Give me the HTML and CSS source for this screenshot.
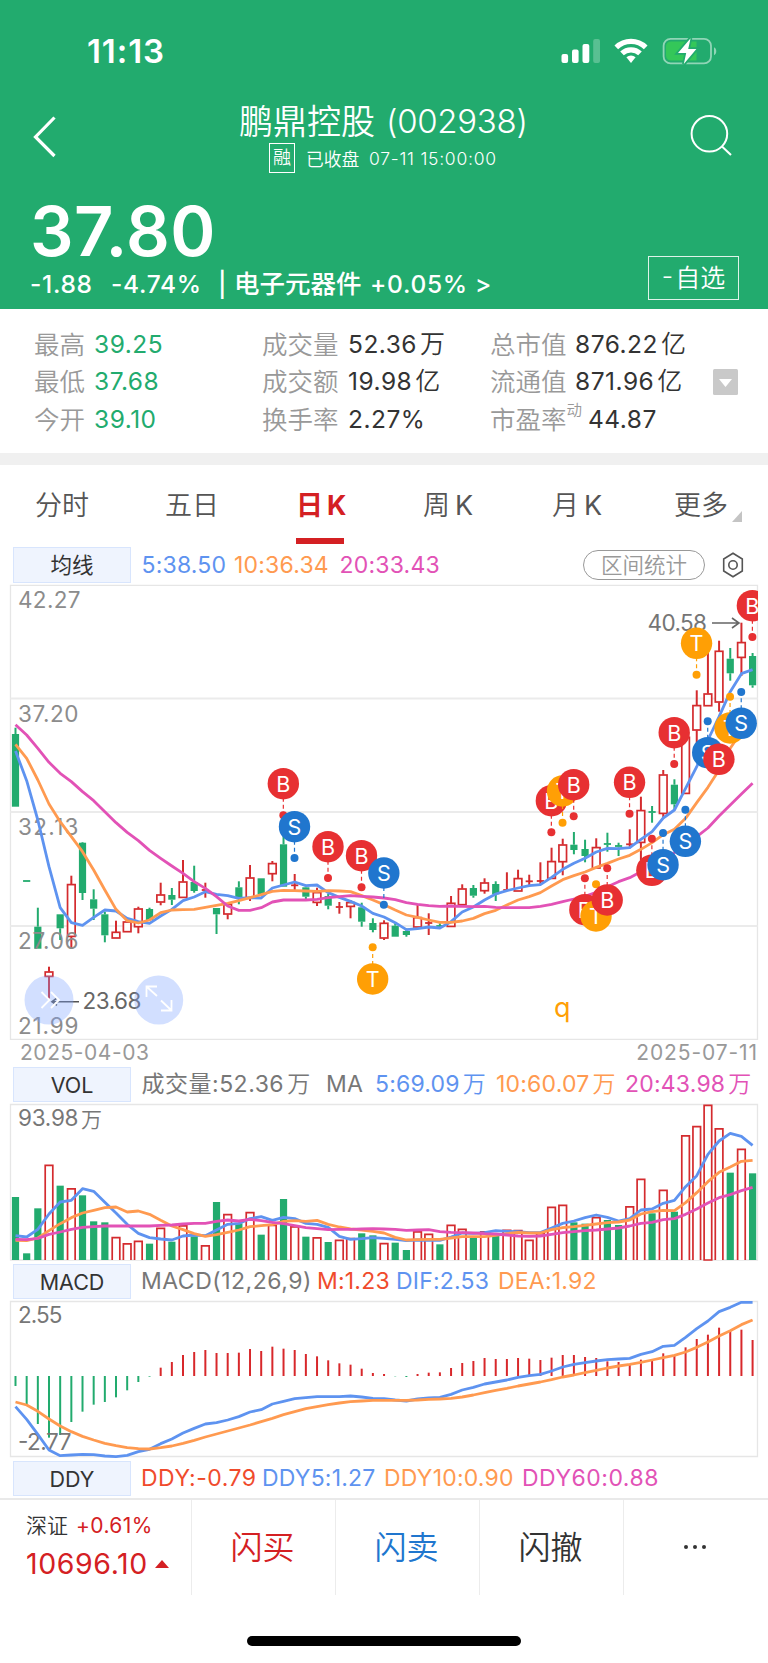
FILE: index.html
```html
<!DOCTYPE html>
<html lang="zh-CN">
<head>
<meta charset="utf-8">
<title>鹏鼎控股 (002938)</title>
<link rel="stylesheet" href="styles.css">
</head>
<body>
<header class="header">
  <div class="status">
    <span class="clock">11:13</span>
    <svg class="status-icons" width="160" height="32" viewBox="560 35 160 32">
      <g fill="#fff">
        <rect x="561.5" y="54" width="6.6" height="9" rx="2"/>
        <rect x="572" y="49.5" width="6.6" height="13.5" rx="2"/>
        <rect x="582.5" y="44" width="6.8" height="19" rx="2"/>
        <rect x="593.2" y="39" width="6.8" height="24" rx="2" opacity=".25"/>
      </g>
      <g fill="none" stroke="#fff" stroke-width="5.2">
        <path d="M616.3 47.4a21 21 0 0 1 29.4 0"/>
        <path d="M622 53.4a13 13 0 0 1 18 0"/>
      </g>
      <path d="M626.4 57.2a7 7 0 0 1 9.2 0L631 63z" fill="#fff"/>
      <rect x="663.6" y="38.8" width="47.4" height="24.6" rx="7" fill="none" stroke="#fff" stroke-opacity=".5" stroke-width="1.8"/>
      <path d="M714 47.2v8c3-1.2 3-6.800 0-8z" fill="#fff" opacity=".5"/>
      <path d="M671 41.400h25.500v19.200H671a5 5 0 0 1-5-5v-9.200a5 5 0 0 1 5-5z" fill="#34c759"/>
      <path d="M690.600 38.200 678 52.900h8.200l-2.400 11.200L696.400 48.900h-8.200z" fill="#fff" stroke="#22ab6e" stroke-width="3.500" paint-order="stroke"/>
    </svg>
  </div>
  <div class="nav">
    <svg class="back" width="26" height="46" viewBox="32 114 26 46"><path d="M54.500 117.500 35.500 137l19 19" fill="none" stroke="#fff" stroke-width="3.200"/></svg>
    <div class="heading">
      <h1><span class="name">鹏鼎控股</span><span class="code">(002938)</span></h1>
      <p><i class="tag">融</i><span class="closed">已收盘</span><span class="time">07-11 15:00:00</span></p>
    </div>
    <svg class="search" width="44" height="46" viewBox="690 114 44 46"><g fill="none" stroke="#fff" stroke-width="2"><circle cx="709.400" cy="133.800" r="17.800"/><path d="m722 146.500 9 8.500"/></g></svg>
  </div>
  <div class="quote">
    <div>
      <div class="price">37.80</div>
      <div class="change"><span>-1.88</span><span>-4.74%</span><span>|</span><span class="sector">电子元器件</span><span>+0.05%</span><span>&gt;</span></div>
    </div>
    <button class="fav"><span>-</span>自选</button>
  </div>
</header>

<section class="stats">
  <dl class="s1">
    <dt>最高</dt><dd>39.25</dd>
    <dt>最低</dt><dd>37.68</dd>
    <dt>今开</dt><dd>39.10</dd>
  </dl>
  <dl class="s2">
    <dt>成交量</dt><dd>52.36<b>万</b></dd>
    <dt>成交额</dt><dd>19.98<b>亿</b></dd>
    <dt>换手率</dt><dd>2.27%</dd>
  </dl>
  <dl class="s3">
    <dt>总市值</dt><dd>876.22<b>亿</b></dd>
    <dt>流通值</dt><dd>871.96<b>亿</b></dd>
    <dt>市盈率<sup>动</sup></dt><dd class="pe">44.87</dd>
  </dl>
  <svg class="expand" width="25" height="26" viewBox="0 0 25 26"><rect width="25" height="26" rx="1.500" fill="#c9c9c9"/><path d="M6 10h13l-6.500 8z" fill="#fff"/></svg>
</section>

<nav class="tabs">
  <a>分时</a><a>五日</a><a class="on">日<em>K</em></a><a>周<em>K</em></a><a>月<em>K</em></a><a>更多</a>
  <svg width="10" height="11" viewBox="0 0 10 11"><path d="M10 0v11H0z" fill="#c4c4c4"/></svg>
</nav>

<main>
  <div class="legend l-ma">
    <span class="box">均线</span>
    <span class="blue">5:38.50</span><span class="orange">10:36.34</span><span class="pink">20:33.43</span>
    <button class="pill">区间统计</button>
    <svg class="gear" width="24" height="28" viewBox="0 0 24 28"><g fill="none" stroke="#555" stroke-width="1.600"><path d="M12 2.200 21.300 8v12L12 25.800 2.700 20V8z"/><circle cx="12" cy="14" r="4.200"/></g></svg>
  </div>
  <svg class="chart" id="kline" width="768" height="457" viewBox="0 584 768 457"></svg>
  <div class="dates"><span>2025-04-03</span><span>2025-07-11</span></div>
  <div class="legend l-vol">
    <span class="box">VOL</span>
    <span>成交量:52.36<b>万</b></span><span class="ma">MA</span><span class="blue">5:69.09<b>万</b></span><span class="orange">10:60.07<b>万</b></span><span class="pink">20:43.98<b>万</b></span>
  </div>
  <svg class="chart" id="vol" width="768" height="160" viewBox="0 1102 768 160"></svg>
  <div class="legend l-macd">
    <span class="box">MACD</span>
    <span>MACD(12,26,9)</span><span class="red">M:1.23</span><span class="blue">DIF:2.53</span><span class="orange">DEA:1.92</span>
  </div>
  <svg class="chart" id="macd" width="768" height="161" viewBox="0 1299 768 161"></svg>
  <div class="legend l-ddy">
    <span class="box">DDY</span>
    <span class="red">DDY:-0.79</span><span class="blue">DDY5:1.27</span><span class="orange">DDY10:0.90</span><span class="pink">DDY60:0.88</span>
  </div>
</main>

<footer class="bar">
  <div class="index">
    <p><span class="ix">深证</span><span class="pct">+0.61%</span></p>
    <p class="val"><span>10696.10</span><svg width="14" height="8" viewBox="0 0 14 8"><path d="M7 0l7 8H0z" fill="#d42023"/></svg></p>
  </div>
  <a class="buy">闪买</a><a class="sell">闪卖</a><a>闪撤</a>
  <a class="more"><svg width="24" height="6" viewBox="0 0 24 6"><g fill="#333"><circle cx="3" cy="3" r="2"/><circle cx="12" cy="3" r="2"/><circle cx="21" cy="3" r="2"/></g></svg></a>
</footer>
<div class="home"></div>
<script src="charts.js"></script>
</body>
</html>
```
FILE: styles.css
```css
* { box-sizing: border-box; margin: 0; padding: 0; }
body { width: 768px; height: 1663px; overflow: hidden; background: #fff; color: #333; font-family: Inter, "Noto Sans CJK SC", sans-serif; font-weight: 400; }
button { font: inherit; background: none; }
em, i { font-style: normal; }
b { font-weight: inherit; }
svg { display: block; flex: none; }
span, dd, dt { white-space: nowrap; }

.header { height: 309px; background: #22ab6e; color: #fff; overflow: hidden; }
.status { height: 102px; display: flex; align-items: center; justify-content: space-between; padding: 0 48px 0 87px; }
.clock { font-size: 33px; font-weight: 600; letter-spacing: 0.900px; }
.nav { height: 74px; display: flex; padding: 0 34px 0 32px; }
.back, .search { margin-top: 12px; }
.heading { width: 300px; margin-left: 180px; margin-right: 152px; flex: none; }
.heading h1 { height: 38px; line-height: 40px; font-size: 34px; font-weight: 400; display: flex; padding-left: 1px; }
.name { font-weight: 350; width: 147px; }
.code { font-size: 33px; font-weight: 350; letter-spacing: -0.300px; line-height: 38px; }
.heading p { height: 36px; display: flex; align-items: center; font-size: 17.500px; padding-left: 31px; font-weight: 350; }
.tag { width: 26px; height: 30px; border: 1.500px solid #fff; font-size: 18px; line-height: 27px; text-align: center; }
.closed { margin-left: 11px; width: 63px; font-size: 17.800px; }
.time { letter-spacing: 0.750px; }
.quote { height: 105px; margin-top: 20px; display: flex; justify-content: space-between; align-items: flex-end; padding: 0 29px 0 30px; }
.price { height: 71px; line-height: 71px; font-size: 68.500px; font-weight: 600; letter-spacing: 0.500px; }
.change { height: 34px; line-height: 34px; display: grid; grid-template-columns: 81px 107px 16px 136px 105px 30px; font-size: 24.500px; font-weight: 550; letter-spacing: 0.700px; }
.sector { font-size: 25.500px; font-weight: 500; letter-spacing: 0; }
.fav { width: 91px; height: 44px; margin-bottom: 1px; border: 1.500px solid rgba(255,255,255,.85); color: #fff; font-size: 25px; line-height: 42px; font-weight: 350; display: flex; justify-content: center; gap: 2px; }
.fav span { line-height: 38px; }

.stats { height: 144px; padding: 16.500px 30px 0 34px; display: flex; font-size: 25.500px; }
.stats dl { display: grid; grid-auto-rows: 37.600px; line-height: 37.600px; height: 113px; }
.s1 { grid-template-columns: 60px 168px; }
.s2 { grid-template-columns: 86px 142px; }
.s3 { grid-template-columns: 85px 138px; }
.stats dt { color: #999; font-weight: 350; }
.stats dd { font-size: 24.500px; letter-spacing: 0.500px; }
.stats dd b { font-size: 25px; font-weight: 350; margin-left: 3px; letter-spacing: 0; }
.s1 dd { color: #22ab6e; }
.stats sup { font-size: 15.500px; line-height: 0; vertical-align: 13px; }
.pe { padding-left: 13px; }
.expand { margin-top: 43px; }

.tabs { height: 94px; border-top: 12px solid #f0f0f0; display: grid; grid-template-columns: 130px 131px 127px 129px 122px 58px 12px; padding-left: 35px; font-size: 27px; line-height: 81px; color: #555; }
.tabs a { height: 79px; font-weight: 350; }
.tabs em { font-size: 27px; margin-left: 5px; font-weight: 400; }
.tabs .on { color: #d42023; font-weight: 700; border-bottom: 6px solid #d42023; width: 48px; white-space: nowrap; }
.tabs .on em { font-weight: 700; margin-left: 4px; }
.tabs svg { margin-top: 46px; }

main { color: #777; }
.legend { height: 36px; display: grid; align-items: center; line-height: 37px; font-size: 23px; font-weight: 400; padding-left: 13px; letter-spacing: 0.200px; }
.legend b { font-weight: 350; margin-left: 3px; }
.box { width: 118px; height: 35.500px; line-height: 34px; text-align: center; border: 1.500px solid #d8e5fd; background: #eff4fe; color: #333; font-size: 21.500px; }
.l-ma { margin-top: -1px; height: 38px; grid-template-columns: 128.500px 92.500px 105.500px 243.500px 138px 24px; }
.l-vol { grid-template-columns: 128.500px 184.500px 49px 121px 129px 140px; }
.l-vol > span:nth-child(2) { letter-spacing: 0.500px; }
.l-macd { margin-top: 1px; grid-template-columns: 128px 176px 79px 102px 120px; }
.l-macd > span:nth-child(2) { letter-spacing: 0.500px; }
.l-ddy { grid-template-columns: 128px 121px 122px 138px 150px; }
.l-ddy > span:nth-child(2), .l-ddy > span:last-child { letter-spacing: 0.500px; }
.legend .box { letter-spacing: 0; }
.blue { color: #5e93f0; } .orange { color: #ff9a50; } .pink { color: #e252b6; } .red { color: #f04b2c; }
.pill { width: 122px; height: 30px; border: 1.500px solid #999; border-radius: 15px; color: #999; font-size: 21.500px; font-weight: 350; line-height: 26px; letter-spacing: 0; }
.chart { overflow: hidden; }
.dates { height: 25px; line-height: 24px; display: flex; justify-content: space-between; padding: 0 10px 0 20px; font-size: 21px; color: #999; letter-spacing: 0.550px; }
.dates span:last-child { letter-spacing: 0.900px; }

.bar { margin-top: 2px; height: 97px; border-top: 2px solid #e9e9e9; display: grid; grid-template-columns: 192px 144px 144px 144px 144px; }
.bar > * { border-right: 1.500px solid #ececec; }
.bar .more { border: 0; display: flex; justify-content: center; align-items: center; padding-bottom: 2px; }
.bar a { font-size: 32px; line-height: 95px; text-align: center; font-weight: 350; color: #333; height: 95px; padding-right: 2px; }
.bar .buy { color: #d42023; } .bar .sell { color: #2076ce; }
.index { padding: 10px 0 0 26px; }
.index p { height: 32px; line-height: 32px; font-size: 21px; display: flex; }
.ix { width: 50px; font-weight: 350; }
.pct { color: #d42023; letter-spacing: 0.400px; }
.index .val { height: 44px; line-height: 46px; font-size: 28.500px; color: #d42023; align-items: center; gap: 7px; letter-spacing: 0.600px; }
.home { width: 274px; height: 10px; border-radius: 5px; background: #000; margin: 41px auto 0; }
```
FILE: charts.js
```js
const NS = 'http://www.w3.org/2000/svg';
const GREEN = '#22ab6e', RED = '#d42b2e', BLUE = '#5e93f0', ORANGE = '#ff9a50', PINK = '#e252b6';
const X = i => 15.5 + i * 11.168;
const nums = s => s.split(',').map(Number);

function add(p, tag, attrs, text) {
  const e = document.createElementNS(NS, tag);
  for (const k in attrs) e.setAttribute(k, attrs[k]);
  if (text !== undefined) e.textContent = text;
  p.appendChild(e);
  return e;
}
function label(p, x, y, w, text, color = '#8c8c8c', size = 22.5) {
  add(p, 'text', { x, y, textLength: w, fill: color, 'font-size': size }, text);
}
function line(p, ys, color, width = 2.8, from = 0) {
  add(p, 'polyline', { points: ys.map((y, i) => X(i + from) + ',' + y).join(' '), fill: 'none', stroke: color, 'stroke-width': width, 'stroke-linejoin': 'round' });
}
function seg(p, x1, y1, x2, y2, color, w) {
  add(p, 'line', { x1, y1, x2, y2, stroke: color, 'stroke-width': w });
}

// Daily candles: colour, high, body top, body bottom, low
const k = document.getElementById('kline');
add(k, 'path', { d: 'M10.500 585.300H757.500V1039.400H10.500Z', fill: 'none', stroke: '#e6e6e6', 'stroke-width': 1.3 });
[698.6, 812, 926].forEach(y => seg(k, 10.5, y, 757.5, y, '#ebebeb', 2));
const candles = `g 727.7 734 806.7 806.7|g 881.7 881 882.4 881.7|g 907.7 926.7 948.7 948.7|r 966.7 971.7 976.7 998.5|g 914.3 914.3 928.3 940|r 875.7 884.3 936.7 948.3|g 842 842.7 893 900|g 889.3 899.3 908.7 920|g 911.7 914.3 935.3 942.3|r 920.7 932 938.3 938.3|r 921.7 921.7 932 932|r 906.7 908.7 927 933.3|g 907.7 909 920 920|r 882.7 894.7 902.3 905.3|g 888 895 899.7 905|r 860 881.7 897.7 897.7|g 865.7 882 891 892.7|r 882.7 890 890.2 897.7|g 908 908 914.3 934|r 904 904 914.3 919.3|g 881.3 887.3 898.3 904.3|r 865 877.7 898.3 901|g 878.3 878.3 894 894|r 861 863.3 874 881.3|g 816 844.3 886.7 886.7|r 874 885.3 885.5 890|g 885.7 887.3 896.7 900|r 887.7 892.3 902.7 906|g 894 896 905.7 909.3|r 902 907 907.2 913.7|r 900 902.3 906.7 918.3|g 902.7 907.3 921.7 926.7|g 918.3 923 930 932.3|r 920.3 923 938.3 940|g 923.3 925.7 936.7 936.7|g 928.3 931 935 936.7|r 905 917.3 927.3 927.3|r 913.3 923 923.2 935|g 923.3 926 926.2 928.3|r 896 903 926.7 926.7|r 884.3 888.7 905 905|g 885 888 895.7 897.7|r 878.3 882.7 891 893.7|g 881.3 884 894.3 901|r 872.3 890 890.2 890|r 869.7 878.3 891.3 891.3|r 874.7 881.3 881.5 885|r 862.3 881 881.2 885|r 847.7 861.3 878.7 878.7|r 838.7 844.7 862 875.3|g 832 844.7 850 854.3|g 839.7 849 856 862.3|r 838.3 847.3 868.3 868.3|g 832.7 844 844.8 851.7|g 842.7 846 847.3 856|r 829.3 844.3 844.5 848.3|r 796.7 810.3 842.7 860|g 806 812 812.7 822.7|r 770 774.7 813.7 817.7|g 779.3 784.7 804.3 810|r 735 737 793.7 793.7|r 690.3 705.3 730.3 745|r 650 693.7 706 706|r 640.7 651 702.3 711.7|g 648 658.7 673.3 680.7|r 622.7 642.3 657.7 676|g 653 656 685.3 687.7`.split('|');
candles.forEach((c, i) => {
  const [col, ...v] = c.split(' ');
  const [h, t, b, l] = v.map(Number), x = X(i), color = col === 'g' ? GREEN : RED;
  if (h < t) seg(k, x, h, x, t, color, 2);
  if (l > b) seg(k, x, b, x, l, color, 2);
  if (b - t < 2) seg(k, x - 3.6, t, x + 3.6, t, color, 1.8);
  else if (col === 'g') add(k, 'rect', { x: x - 3.6, y: t, width: 7.2, height: b - t, fill: color });
  else add(k, 'rect', { x: x - 3.8, y: t + .3, width: 7.6, height: b - t - .6, fill: '#fff', stroke: color, 'stroke-width': 1.7 });
});

[['42.27', 608], ['37.20', 722], ['32.13', 835], ['27.06', 949], ['21.99', 1034]].forEach(([t, y]) => label(k, 18, y, t === '42.27' ? 62.5 : 60.5, t));

const c3 = s => nums(s).map(v => 580 + v / 3);
const c4 = s => nums(s).map(v => 740 + v / 3);
const c6 = s => nums(s).map(v => 810 + v / 3);
line(k, [...c3('513,602,720,860,983,1028,1036,1012,990,993,1015,1025,1030,1008,988,962,951,935,943,947,955,953'),
  ...c4('474,444,435,426,437,435,458,472,484,498,520,531,548,569,566,561,564,545,516,501,480,462,452,444'),
  ...c6('227,224,202,178,160,145,126,115,116,113,88,65,24,0,-65,-130,-210,-280,-355,-409,-421')], BLUE);
line(k, [...c3('493,535,600,672,725,770,815,870,930,988,1022,1029,1020,998,990,989,988,982,976,970,962,953'),
  ...c4('464,454,451,452,453,454,452,453,455,467,480,494,510,525,532,540,547,547,543,535,521,511,495,480'),
  ...c6('260,248,228,209,197,186,172,160,147,136,118,98,74,58,25,-22,-68,-120,-185,-235,-277')], ORANGE);
line(k, [...c3('434,465,505,547,580,605,635,662,695,728,757,782,811,835,858,880,905,925,950,978,991,991'),
  ...c4('503,486,480,480,480,478,473,470,467,469,471,474,479,488,493,497,499,498,499,500,499,502,503,503'),
  ...c6('293,289,283,275,267,259,247,230,215,203,185,170,155,128,103,80,54,18,-15,-48,-80')], PINK);

label(k, 647.5, 631, 59.500, '40.58', '#757575');
add(k, 'path', { d: 'M712 623H738M732 618l7 5-7 5', fill: 'none', stroke: '#666', 'stroke-width': 1.6 });

// Trade markers: index, badge centre, dot centre, letter
const tone = { B: '#e73032', S: '#2076ce', T: '#ff9f05' };
const clip = add(k, 'clipPath', { id: 'plot' });
add(clip, 'rect', { x: 10, y: 584, width: 748, height: 457 });
const marks = add(k, 'g', { 'clip-path': 'url(#plot)' });
[[24, 783.7, 815.3, 'B'], [25, 826.7, 858, 'S'], [28, 846.7, 878, 'B'], [31, 855.7, 887.3, 'B'], [32, 979, 947.3, 'T'], [33, 873, 904.7, 'S'],
 [48, 800.7, 832.3, 'B'], [49, 791, 822.7, 'T'], [50, 784.7, 816.3, 'B'], [51, 909.7, 878.3, 'B'], [52, 916, 884.3, 'T'], [53, 900, 868.3, 'B'],
 [55, 782.3, 813.7, 'B'], [57, 870.3, 838.7, 'B'], [58, 864.7, 833, 'S'], [59, 732.7, 764, 'B'], [60, 841.3, 809.7, 'S'], [61, 643.3, 674.7, 'T'],
 [62, 752.7, 721.3, 'S'], [63, 759.3, 0, 'B'], [64, 728, 696.7, 'T'], [65, 723.3, 692, 'S'], [66, 605.7, 637, 'B']].forEach(([i, y, d, t]) => {
  const x = X(i) - .2, c = tone[t];
  if (d) {
    add(marks, 'line', { x1: x, y1: y, x2: x, y2: d, stroke: c, 'stroke-width': 1.2, 'stroke-dasharray': '4 3' });
    add(marks, 'circle', { cx: x, cy: d, r: 4, fill: c });
  }
  add(marks, 'circle', { cx: x, cy: y, r: 15.7, fill: c });
  add(marks, 'text', { x, y: y + 7.9, 'text-anchor': 'middle', fill: '#fff', 'font-size': 21.5 }, t);
});
add(k, 'text', { x: 554, y: 1016.500, fill: '#ff9f05', 'font-size': 27 }, 'q');

label(k, 82.5, 1008.7, 59, '23.68', '#666');
add(k, 'path', { d: 'M79 1001.700H52M57 998l-5 3.700 5 3.700', fill: 'none', stroke: '#555', 'stroke-width': 1.6 });
[49, 158.700].forEach(cx => add(k, 'circle', { cx, cy: 1000, r: 24.5, fill: '#7da3ff', opacity: .35 }));
add(k, 'path', { d: 'M41.500 992l8 8-8 8M51 992l8 8-8 8M146.500 997v-10.500H157M147 987l10 9M161 1010.500h10.500V1000M171 1010l-10-9.500', fill: 'none', stroke: '#fff', 'stroke-width': 1.8 });

// Volume
const v = document.getElementById('vol');
add(v, 'path', { d: 'M10.500 1104.500H757.500V1260H10.500Z', fill: 'none', stroke: '#e6e6e6', 'stroke-width': 1.3 });
'g411,g580,g445,r315,g377,r386,g406,g484,g487,r532,r551,r543,g551,r504,g545,r497,g529,r557,g426,r463,g490,r457,g524,r495,g417,r500,g530,r533,g546,r540,r535,g520,g526,r550,g548,g570,r515,r522,g553,r495,r507,g532,r515,g528,r510,r511,r540,r520,r441,r435,g487,g491,r472,g480,g495,r440,r357,g460,r390,g455,r227,r199,r135,r206,g338,r267,g340'.split(',').forEach((s, i) => {
  const y = 1060 + s.slice(1) / 3, x = X(i);
  if (s[0] === 'g') add(v, 'rect', { x: x - 3.6, y, width: 7.2, height: 1260 - y, fill: GREEN });
  else add(v, 'path', { d: `M${x - 3.800} 1260V${y + .3}H${x + 3.800}V1260${i === 62 ? 'Z' : ''}`, fill: '#fff', stroke: RED, 'stroke-width': 1.7 });
});
label(v, 18, 1125.6, 60.500, '93.98', '#777');
add(v, 'text', { x: 81, y: 1126.500, fill: '#777', 'font-size': 21, 'font-weight': 350 }, '万');
const low = s => nums(s).map(n => 1060 + n / 3);
line(v, low('527,531,508,462,426,421,386,394,427,459,493,520,533,537,540,528,525,527,510,493,490,476,470,481,472,476,490,493,502,529,538,536,533,535,538,542,540,541,541,531,519,520,518,512,514,515,518,518,504,490,483,473,465,472,483,476,450,447,430,421,380,347,283,243,220,229,256'), BLUE);
line(v, low('541,542,534,512,491,473,459,451,443,441,456,453,463,481,498,509,521,529,524,517,510,500,497,494,484,482,484,481,493,501,507,510,514,519,532,540,539,538,538,534,530,530,530,526,521,517,519,519,509,503,500,496,492,488,486,480,462,455,451,452,428,398,365,337,321,304,301'), ORANGE);
line(v, low('538,539,535,523,516,508,502,500,498,498,498,498,498,496,495,492,490,490,484,480,483,478,482,487,491,497,503,506,509,508,508,507,506,507,508,511,510,509,515,517,518,519,521,522,525,528,529,528,523,518,515,512,510,507,504,498,490,487,479,476,463,447,429,413,404,392,382'), PINK);

// MACD
const m = document.getElementById('macd');
add(m, 'path', { d: 'M10.500 1301.500H757.500V1456.500H10.500Z', fill: 'none', stroke: '#e6e6e6', 'stroke-width': 1.3 });
const mc = s => nums(s).map(n => 1260 + n / 3);
mc('378,435,492,533,525,486,455,434,426,412,391,366,350,323,306,285,276,270,279,279,278,267,273,260,266,270,282,289,301,310,314,326,339,342,349,351,342,338,337,324,309,303,294,297,297,294,296,300,293,285,285,291,294,304,306,315,299,303,280,287,262,237,224,203,210,209,240').forEach((y, i) => seg(m, X(i), 1376, X(i), y, y > 1376 ? GREEN : '#d8282b', 2));
label(m, 18, 1322.6, 44.5, '2.55', '#777');
label(m, 18, 1449.5, 53.5, '-2.77', '#777');
line(m, mc('440,478,523,570,587,585,583,584,588,590,586,575,568,551,537,519,505,492,488,480,470,456,449,432,424,416,413,410,410,410,408,411,415,416,420,423,417,414,412,403,390,382,372,366,360,352,347,343,333,321,313,308,303,299,297,295,283,275,259,256,232,206,183,155,142,127,127'), BLUE);
line(m, mc('426,435,454,477,498,515,529,540,550,557,563,566,567,563,558,550,541,531,522,513,504,495,485,475,464,455,446,440,434,429,425,423,421,421,421,421,420,418,417,415,411,405,398,391,385,378,372,366,359,351,345,338,331,324,318,313,307,300,293,286,276,262,246,228,212,194,180'), ORANGE);
```
